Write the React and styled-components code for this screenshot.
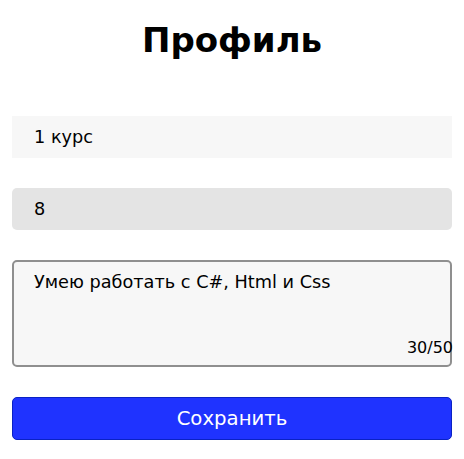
import React, { useState } from 'react';
import styled, { createGlobalStyle } from 'styled-components';

const GlobalStyle = createGlobalStyle`
  html, body {
    margin: 0;
    padding: 0;
    background: #ffffff;
  }
  body {
    font-family: 'DejaVu Sans', 'Open Sans', sans-serif;
    color: #000;
  }
`;

const Page = styled.div`
  padding: 18px 12px 0;
  display: flex;
  flex-direction: column;
`;

const Title = styled.h1`
  margin: 0 0 54px;
  text-align: center;
  font-size: 34px;
  font-weight: 700;
  line-height: 44px;
`;

const Form = styled.form`
  display: flex;
  flex-direction: column;
  gap: 30px;
`;

const Field = styled.input`
  box-sizing: border-box;
  width: 100%;
  height: 42px;
  padding: 0 22px;
  border: none;
  outline: none;
  border-radius: ${p => (p.$rounded ? '5px' : '0')};
  background: ${p => (p.$muted ? '#e4e4e4' : '#f7f7f7')};
  font-family: inherit;
  font-size: 17.7px;
  color: #000;
`;

const AreaWrap = styled.div`
  position: relative;
`;

const Area = styled.textarea`
  display: block;
  box-sizing: border-box;
  width: 100%;
  height: 107px;
  padding: 8px 20px;
  border: 2px solid #8f8f8f;
  border-radius: 5px;
  background: #f7f7f7;
  outline: none;
  resize: none;
  font-family: inherit;
  font-size: 17.7px;
  line-height: 24px;
  color: #000;
`;

const Counter = styled.span`
  position: absolute;
  right: -1px;
  bottom: 10px;
  font-size: 16px;
  color: #000;
`;

const SaveButton = styled.button`
  height: 43px;
  border: 1px solid #0a22c4;
  border-radius: 5px;
  background: #1f33ff;
  color: #fff;
  font-family: inherit;
  font-size: 19.7px;
  cursor: pointer;
`;

export default function App() {
  const [course, setCourse] = useState('1 курс');
  const [num, setNum] = useState('8');
  const [about, setAbout] = useState('Умею работать с C#, Html и Css');

  return (
    <>
      <GlobalStyle />
      <Page>
        <Title>Профиль</Title>
        <Form onSubmit={e => e.preventDefault()}>
          <Field value={course} onChange={e => setCourse(e.target.value)} />
          <Field $muted $rounded value={num} onChange={e => setNum(e.target.value)} />
          <AreaWrap>
            <Area maxLength={50} value={about} onChange={e => setAbout(e.target.value)} />
            <Counter>{about.length}/50</Counter>
          </AreaWrap>
          <SaveButton type="submit">Сохранить</SaveButton>
        </Form>
      </Page>
    </>
  );
}
